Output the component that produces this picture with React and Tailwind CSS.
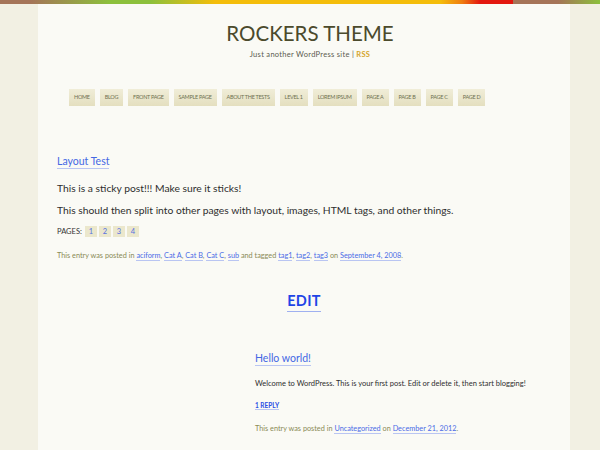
import React from "react";

const font = { fontFamily: "Lato, 'Noto Sans', sans-serif" };

function L({ children }) {
  return (
    <a className="text-[#4a6be6] border-b border-[#b9c5f2] leading-none">{children}</a>
  );
}

const nav = ["HOME", "BLOG", "FRONT PAGE", "SAMPLE PAGE", "ABOUT THE TESTS", "LEVEL 1", "LOREM IPSUM", "PAGE A", "PAGE B", "PAGE C", "PAGE D"];

export default function App() {
  return (
    <div className="w-[600px] h-[450px] overflow-hidden bg-[#f2f0e3]" style={font}>
      <div className="flex h-[4px]">
        <div className="w-[513px] bg-[linear-gradient(90deg,#a57458_0px,#a57458_30px,#8cc03c_110px,#8cc03c_150px,#f4bd0a_215px,#f4bd0a_440px,#ef7d10_462px,#e3170f_480px,#e3170f_513px)]" />
        <div className="flex-1 bg-[linear-gradient(90deg,#a57458_0px,#a57458_45px,#8cc03c_87px)]" />
      </div>
      <div className="ml-[38px] w-[532px] h-[446px] bg-[#fafaf5] flex flex-col">
        <h1 className="mt-[16px] text-center text-[20.5px] leading-[26px] text-[#4b4a2c] pl-[12px]">ROCKERS THEME</h1>
        <p className="mt-[4px] text-center text-[7.5px] leading-[10px] tracking-[0.3px] text-[#5a5a50] pl-[12px]">
          Just another WordPress site | <span className="text-[#d4a42a] font-bold">RSS</span>
        </p>
        <nav className="mt-[29px] ml-[31px] flex gap-[5px]">
          {nav.map((n) => (
            <span key={n} className="h-[17px] px-[5px] flex items-center text-[5.5px] tracking-[-0.3px] text-[#6f7152] bg-[linear-gradient(180deg,#f0edd8,#e4dfbf)]">{n}</span>
          ))}
        </nav>
        <div className="ml-[19px] mt-[48px]">
          <div className="text-[10.5px] leading-[14px]">
            <span className="text-[#4468e4] border-b border-[#b9c5f2] pb-[1px]">Layout Test</span>
          </div>
          <p className="mt-[9px] text-[10.3px] leading-[22px] text-[#2e2e2e]">This is a sticky post!!! Make sure it sticks!</p>
          <p className="text-[10.3px] leading-[22px] text-[#2e2e2e]">This should then split into other pages with layout, images, HTML tags, and other things.</p>
          <div className="mt-[5px] flex items-center gap-[1px] text-[7.5px] text-[#333]">
            <span className="mr-[2px]">PAGES:</span>
            {["1", "2", "3", "4"].map((p) => (
              <span key={p} className="w-[12px] h-[11px] flex items-center justify-center bg-[#ebe7cc] text-[#5670e0] mr-[1px]">{p}</span>
            ))}
          </div>
          <p className="mt-[13px] text-[7.3px] leading-[12px] text-[#8a8a55]">
            This entry was posted in <L>aciform</L>, <L>Cat A</L>, <L>Cat B</L>, <L>Cat C</L>, <L>sub</L> and tagged <L>tag1</L>, <L>tag2</L>, <L>tag3</L> on <L>September 4, 2008</L>.
          </p>
        </div>
        <div className="mt-[30px] flex justify-center">
          <span className="text-[14.5px] leading-[18px] font-bold text-[#1f45e6] border-b border-[#9fb0f0] pb-[1px] tracking-[0.3px]">EDIT</span>
        </div>
        <div className="ml-[217px] mt-[39px]">
          <div className="text-[10.5px] leading-[14px]">
            <span className="text-[#4468e4] border-b border-[#b9c5f2] pb-[1px]">Hello world!</span>
          </div>
          <p className="mt-[13px] text-[7.5px] leading-[12px] text-[#2e2e2e]">Welcome to WordPress. This is your first post. Edit or delete it, then start blogging!</p>
          <div className="mt-[11px] text-[6.5px] leading-[9px]">
            <span className="font-bold text-[#2a4fe4] border-b border-[#b9c5f2]">1 REPLY</span>
          </div>
          <p className="mt-[13px] text-[7.3px] leading-[12px] text-[#8a8a55]">
            This entry was posted in <L>Uncategorized</L> on <L>December 21, 2012</L>.
          </p>
        </div>
      </div>
    </div>
  );
}
